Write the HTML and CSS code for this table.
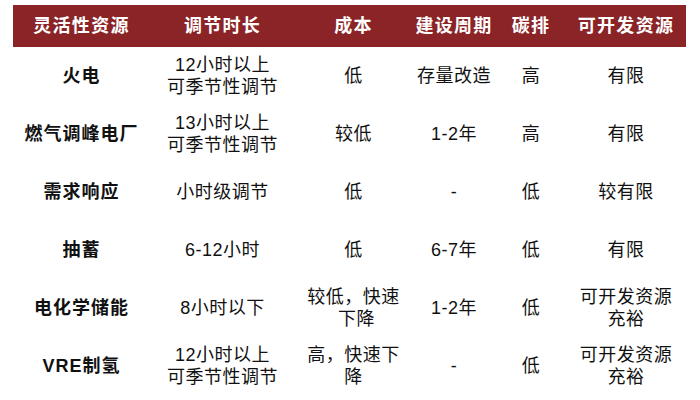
FILE: index.html
```html
<!DOCTYPE html>
<html lang="zh-CN">
<head>
<meta charset="utf-8">
<link rel="stylesheet" href="styles.css">
</head>
<body>
<table class="grid">
  <colgroup>
    <col class="c1"><col class="c2"><col class="c3"><col class="c4"><col class="c5"><col class="c6">
  </colgroup>
  <thead>
    <tr><th>灵活性资源</th><th>调节时长</th><th>成本</th><th>建设周期</th><th>碳排</th><th>可开发资源</th></tr>
  </thead>
  <tbody>
    <tr><td class="name">火电</td><td>12小时以上<br>可季节性调节</td><td>低</td><td>存量改造</td><td>高</td><td>有限</td></tr>
    <tr><td class="name">燃气调峰电厂</td><td>13小时以上<br>可季节性调节</td><td>较低</td><td>1-2年</td><td>高</td><td>有限</td></tr>
    <tr><td class="name">需求响应</td><td>小时级调节</td><td>低</td><td>-</td><td>低</td><td>较有限</td></tr>
    <tr><td class="name">抽蓄</td><td>6-12小时</td><td>低</td><td>6-7年</td><td>低</td><td>有限</td></tr>
    <tr><td class="name">电化学储能</td><td>8小时以下</td><td>较低，快速<br><span class="shift">下降</span></td><td>1-2年</td><td>低</td><td>可开发资源<br>充裕</td></tr>
    <tr><td class="name">VRE制氢</td><td>12小时以上<br>可季节性调节</td><td>高，快速下<br>降</td><td>-</td><td>低</td><td>可开发资源<br>充裕</td></tr>
  </tbody>
</table>
</body>
</html>
```

FILE: styles.css
```css
html, body {
  margin: 0;
  padding: 0;
  background: #ffffff;
}
body {
  padding: 5px 0 0 13px;
  font-family: "Liberation Sans", "Noto Sans CJK SC", sans-serif;
  color: #111111;
}
.grid {
  border-collapse: collapse;
  table-layout: fixed;
  width: 673px;
}
.c1 { width: 137px; }
.c2 { width: 145px; }
.c3 { width: 117px; }
.c4 { width: 84px; }
.c5 { width: 70px; }
.c6 { width: 120px; }
.grid th {
  height: 42px;
  padding: 0;
  background: #8a2426;
  color: #ffffff;
  font-size: 18px;
  font-weight: bold;
  letter-spacing: 1.3px;
  line-height: 22px;
  text-align: center;
  vertical-align: middle;
}
.grid td {
  height: 58px;
  padding: 0;
  font-size: 18px;
  letter-spacing: 0.5px;
  line-height: 22px;
  text-align: center;
  vertical-align: middle;
  white-space: nowrap;
}
.grid td.name {
  font-weight: bold;
  letter-spacing: 1px;
}
.shift {
  padding-left: 6px;
}
```
